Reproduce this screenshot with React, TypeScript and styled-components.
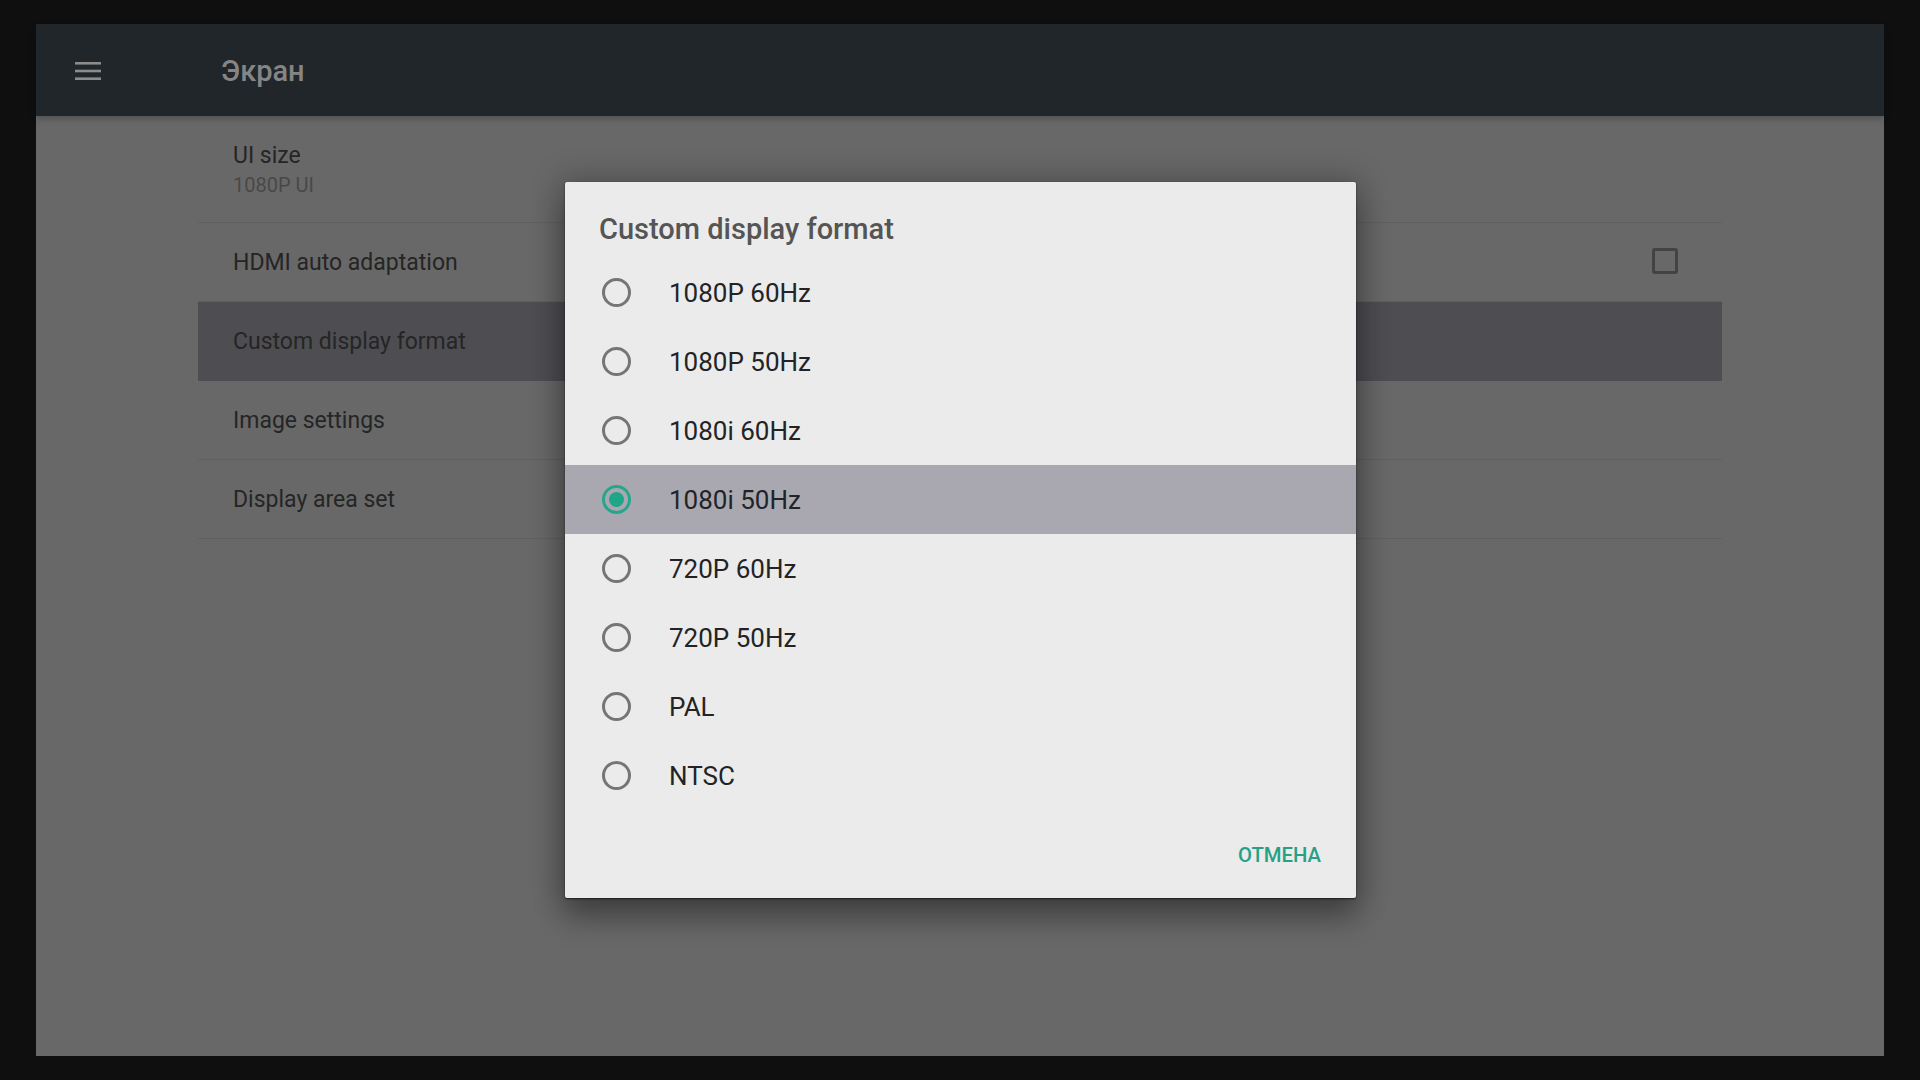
import React from "react";
import styled, { createGlobalStyle } from "styled-components";

const GlobalStyle = createGlobalStyle`
  html, body {
    margin: 0;
    height: 100%;
    background: #0f0f0f;
    font-family: Roboto, "Liberation Sans", sans-serif;
  }
  * { box-sizing: border-box; }
`;

const Page = styled.div`
  width: 1920px;
  height: 1080px;
  padding: 24px 36px;
  background: #0f0f0f;
`;

const Screen = styled.div`
  position: relative;
  height: 100%;
  display: flex;
  flex-direction: column;
  background: #686868;
`;

const AppBar = styled.header`
  flex: 0 0 92px;
  display: flex;
  align-items: center;
  background: #20262a;
  box-shadow: 0 3px 6px rgba(0, 0, 0, 0.22);
`;

const MenuIcon = styled.svg`
  width: 26px;
  height: 20px;
  margin-left: 39px;
  margin-right: 120px;
  margin-top: 2px;
`;

const Title = styled.h1`
  margin: 0;
  font-size: 29px;
  font-weight: 500;
  color: #858585;
  position: relative;
  top: 1px;
`;

const List = styled.div`
  width: 1524px;
  margin-left: 162px;
`;

const Row = styled.div<{ $tall?: boolean; $active?: boolean }>`
  height: ${(p) => (p.$tall ? 107 : 79)}px;
  padding: 2px 45px 0 35px;
  display: flex;
  align-items: center;
  justify-content: space-between;
  background: ${(p) => (p.$active ? "#4e4d52" : "transparent")};
  border-bottom: 1px solid ${(p) => (p.$active ? "transparent" : "#606060")};
`;

const RowLabel = styled.div`
  font-size: 23px;
  line-height: 30px;
  color: #252525;
`;

const RowValue = styled.div`
  font-size: 20px;
  line-height: 28px;
  color: #484848;
`;

const Checkbox = styled.span`
  width: 26px;
  height: 26px;
  margin: -4px -1px 0 0;
  border: 3px solid #434343;
  border-radius: 3px;
`;

const Overlay = styled.div`
  position: absolute;
  inset: 0;
  padding-left: 1px;
  display: flex;
  align-items: center;
  justify-content: center;
`;

const Dialog = styled.div`
  width: 791px;
  height: 716px;
  display: flex;
  flex-direction: column;
  background: #ebebeb;
  border-radius: 2px;
  box-shadow: 0 20px 30px rgba(0, 0, 0, 0.3), 0 0 30px 6px rgba(0, 0, 0, 0.2),
    0 1px 2px rgba(0, 0, 0, 0.6);
`;

const DialogTitle = styled.h2`
  flex: 0 0 76px;
  margin: 0;
  padding: 30px 34px 0;
  font-size: 29px;
  line-height: 34px;
  font-weight: 500;
  color: #555;
`;

const Option = styled.div<{ $selected?: boolean }>`
  flex: 0 0 69px;
  display: flex;
  align-items: center;
  padding-left: 37px;
  gap: 38px;
  background: ${(p) => (p.$selected ? "#a9a8b1" : "transparent")};
`;

const Radio = styled.span<{ $selected?: boolean }>`
  width: 29px;
  height: 29px;
  flex: none;
  display: flex;
  align-items: center;
  justify-content: center;
  border-radius: 50%;
  border: 3px solid ${(p) => (p.$selected ? "#26a68a" : "#757575")};

  &::after {
    content: "";
    display: ${(p) => (p.$selected ? "block" : "none")};
    width: 15px;
    height: 15px;
    border-radius: 50%;
    background: #1fa587;
  }
`;

const OptionLabel = styled.span`
  font-size: 26px;
  color: #232325;
`;

const DialogFooter = styled.div`
  flex: 1;
  display: flex;
  align-items: center;
  justify-content: flex-end;
  padding: 2px 35px 0 0;
`;

const CancelButton = styled.button`
  border: 0;
  padding: 0;
  background: none;
  font-family: inherit;
  font-size: 20.3px;
  font-weight: 500;
  color: #27a085;
`;

const formats = [
  "1080P 60Hz",
  "1080P 50Hz",
  "1080i 60Hz",
  "1080i 50Hz",
  "720P 60Hz",
  "720P 50Hz",
  "PAL",
  "NTSC",
];

const App: React.FC = () => {
  return (
    <Page>
      <GlobalStyle />
      <Screen>
        <AppBar>
          <MenuIcon viewBox="0 0 26 20">
            <rect y="1" width="26" height="2.6" fill="#8c8c8c" />
            <rect y="8.7" width="26" height="2.6" fill="#8c8c8c" />
            <rect y="16.4" width="26" height="2.6" fill="#8c8c8c" />
          </MenuIcon>
          <Title>Экран</Title>
        </AppBar>
        <List>
          <Row $tall>
            <div>
              <RowLabel>UI size</RowLabel>
              <RowValue>1080P UI</RowValue>
            </div>
          </Row>
          <Row>
            <RowLabel>HDMI auto adaptation</RowLabel>
            <Checkbox />
          </Row>
          <Row $active>
            <RowLabel>Custom display format</RowLabel>
          </Row>
          <Row>
            <RowLabel>Image settings</RowLabel>
          </Row>
          <Row>
            <RowLabel>Display area set</RowLabel>
          </Row>
        </List>
        <Overlay>
          <Dialog>
            <DialogTitle>Custom display format</DialogTitle>
            {formats.map((format) => (
              <Option key={format} $selected={format === "1080i 50Hz"}>
                <Radio $selected={format === "1080i 50Hz"} />
                <OptionLabel>{format}</OptionLabel>
              </Option>
            ))}
            <DialogFooter>
              <CancelButton>ОТМЕНА</CancelButton>
            </DialogFooter>
          </Dialog>
        </Overlay>
      </Screen>
    </Page>
  );
};

export default App;
